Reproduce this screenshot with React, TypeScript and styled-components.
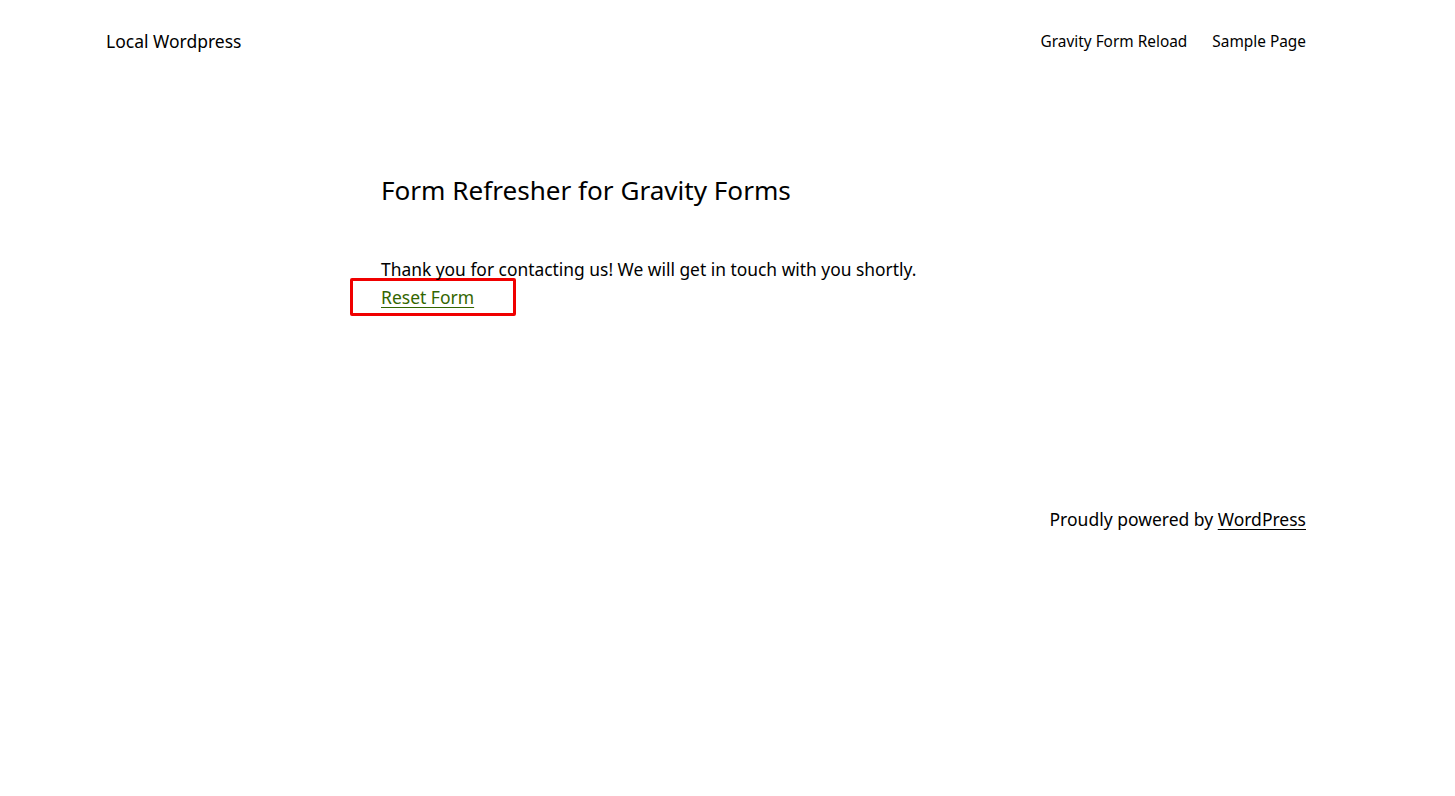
import React from 'react';
import styled, { createGlobalStyle } from 'styled-components';

const GlobalStyle = createGlobalStyle`
    html, body {
        margin: 0;
        padding: 0;
        background: #FFFFFF;
    }
    body {
        font-family: "Noto Sans", "Open Sans", sans-serif;
        color: #000000;
    }
`;

const Page = styled.div`
    width: 1200px;
    padding-left: 106px;
    display: flex;
    flex-direction: column;
`;

const Header = styled.header`
    display: flex;
    justify-content: space-between;
    align-items: center;
    height: 82px;
`;

const SiteTitle = styled.a`
    color: #000000;
    text-decoration: none;
    font-size: 17.5px;
    margin-top: -1px;
`;

const Nav = styled.nav`
    display: flex;
    gap: 25px;
`;

const NavItem = styled.a`
    color: #000000;
    text-decoration: none;
    font-size: 15.4px;
`;

const Main = styled.main`
    width: 650px;
    margin: 0 auto;
    padding-top: 93px;
    min-height: 425px;
    box-sizing: border-box;
`;

const Title = styled.h1`
    font-size: 26.1px;
    font-weight: 400;
    margin: 0 0 49px;
    line-height: 1.2;
`;

const Message = styled.p`
    font-size: 17.4px;
    line-height: 29px;
    margin: 0;
`;

const Highlight = styled.div`
    width: fit-content;
    border: 3px solid #F00000;
    border-radius: 2px;
    margin: -6px 0 0 -31px;
    padding: 2px 39px 0 28px;
    line-height: 29px;
`;

const ResetLink = styled.a`
    color: #336600;
    font-size: 17.5px;
    text-decoration: underline;
    text-underline-offset: 3px;
`;

const Footer = styled.footer`
    display: flex;
    justify-content: flex-end;
    font-size: 17.5px;
`;

const FooterLink = styled.a`
    color: #000000;
    text-decoration: underline;
    text-underline-offset: 3px;
`;

const App: React.FC = () => {
    return (
        <>
            <GlobalStyle />
            <Page>
                <Header>
                    <SiteTitle href="#">Local Wordpress</SiteTitle>
                    <Nav>
                        <NavItem href="#">Gravity Form Reload</NavItem>
                        <NavItem href="#">Sample Page</NavItem>
                    </Nav>
                </Header>

                <Main>
                    <Title>Form Refresher for Gravity Forms</Title>
                    <Message>Thank you for contacting us! We will get in touch with you shortly.</Message>
                    <Highlight>
                        <ResetLink href="#">Reset Form</ResetLink>
                    </Highlight>
                </Main>

                <Footer>
                    <span>Proudly powered by&nbsp;<FooterLink href="#">WordPress</FooterLink></span>
                </Footer>
            </Page>
        </>
    );
};

export default App;
